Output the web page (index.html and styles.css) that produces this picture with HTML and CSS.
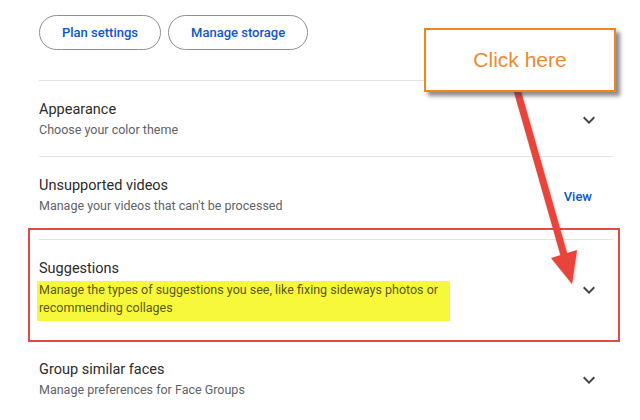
FILE: index.html
```html
<!DOCTYPE html>
<html lang="en">
<head>
<meta charset="utf-8">
<title>Settings</title>
<link rel="stylesheet" href="styles.css">
</head>
<body>
<main class="settings">
  <div class="actions">
    <button class="pill">Plan settings</button>
    <button class="pill">Manage storage</button>
  </div>
  <ul class="rows">
    <li class="row">
      <div class="text">
        <div class="title">Appearance</div>
        <div class="sub">Choose your color theme</div>
      </div>
      <span class="chev"><svg viewBox="0 0 24 24" width="24" height="24"><path d="M16.59 8.59L12 13.17 7.41 8.59 6 10l6 6 6-6z"/></svg></span>
    </li>
    <li class="row row-tall">
      <div class="text">
        <div class="title">Unsupported videos</div>
        <div class="sub">Manage your videos that can't be processed</div>
      </div>
      <button class="link">View</button>
    </li>
    <li class="row row-suggest">
      <div class="text">
        <div class="title">Suggestions</div>
        <div class="sub highlight">Manage the types of suggestions you see, like fixing sideways photos or recommending collages</div>
      </div>
      <span class="chev"><svg viewBox="0 0 24 24" width="24" height="24"><path d="M16.59 8.59L12 13.17 7.41 8.59 6 10l6 6 6-6z"/></svg></span>
    </li>
    <li class="row">
      <div class="text">
        <div class="title">Group similar faces</div>
        <div class="sub">Manage preferences for Face Groups</div>
      </div>
      <span class="chev"><svg viewBox="0 0 24 24" width="24" height="24"><path d="M16.59 8.59L12 13.17 7.41 8.59 6 10l6 6 6-6z"/></svg></span>
    </li>
  </ul>
</main>

<div class="redbox"></div>
<svg class="arrow" width="640" height="420" viewBox="0 0 640 420">
  <line x1="517" y1="90" x2="566" y2="262" />
  <polygon points="572,284 551,258 577,250" />
</svg>
<div class="callout">Click here</div>
</body>
</html>
```

FILE: styles.css
```css
* { box-sizing: border-box; }

html, body {
  margin: 0;
  padding: 0;
  background: #ffffff;
  width: 640px;
  height: 420px;
  overflow: hidden;
}

body {
  font-family: Roboto, "Liberation Sans", Arial, sans-serif;
  color: #1f1f1f;
  position: relative;
}

.settings {
  margin-left: 39px;
  width: 574px;
}

.actions {
  display: flex;
  gap: 7px;
  padding-top: 15px;
  margin-bottom: 30px;
}

.pill {
  height: 35px;
  padding: 0 22px;
  border: 1px solid #8e918f;
  border-radius: 18px;
  background: #fff;
  color: #0b57d0;
  font-family: Roboto, "Liberation Sans", Arial, sans-serif;
  font-size: 13px;
  font-weight: 500;
}

.rows {
  list-style: none;
  margin: 0;
  padding: 0;
}

.row {
  display: flex;
  align-items: center;
  border-top: 1px solid #e3e3e3;
  padding: 19px 12px 16px 0;
}

.row-tall { padding-bottom: 23px; }
.row-suggest { padding-bottom: 19px; }

.text { flex: 1; }

.title {
  font-size: 14.5px;
  line-height: 20px;
  color: #2b2b2b;
}

.sub {
  font-size: 12.5px;
  line-height: 20px;
  color: #5f6368;
}

.highlight {
  background: #f8f83a;
  width: 413px;
  margin-top: 2px;
  margin-left: -2px;
  padding: 0 0 4px 2px;
  line-height: 18px;
  color: #5b5a1a;
}

.chev {
  width: 24px;
  height: 24px;
  display: flex;
}
.chev svg { fill: #444746; }

.link {
  border: 0;
  background: transparent;
  color: #0b57d0;
  font-family: Roboto, "Liberation Sans", Arial, sans-serif;
  font-size: 13px;
  font-weight: 500;
  padding: 0 9px 0 0;
}

.redbox {
  position: absolute;
  left: 28px;
  top: 228px;
  width: 592px;
  height: 114px;
  border: 2px solid #e24a4a;
}

.arrow {
  position: absolute;
  left: 0;
  top: 0;
  filter: drop-shadow(1px 1px 1px rgba(0,0,0,0.25));
}
.arrow line {
  stroke: #e8443c;
  stroke-width: 7;
}
.arrow polygon { fill: #e8443c; }

.callout {
  position: absolute;
  left: 424px;
  top: 28px;
  width: 192px;
  height: 64px;
  border: 2.5px solid #f0851a;
  background: #fff;
  box-shadow: 4px 4px 4px rgba(60, 60, 70, 0.6);
  display: flex;
  align-items: center;
  justify-content: center;
  font-family: "Liberation Sans", Arial, sans-serif;
  font-size: 21px;
  color: #ee8a2e;
}
```
